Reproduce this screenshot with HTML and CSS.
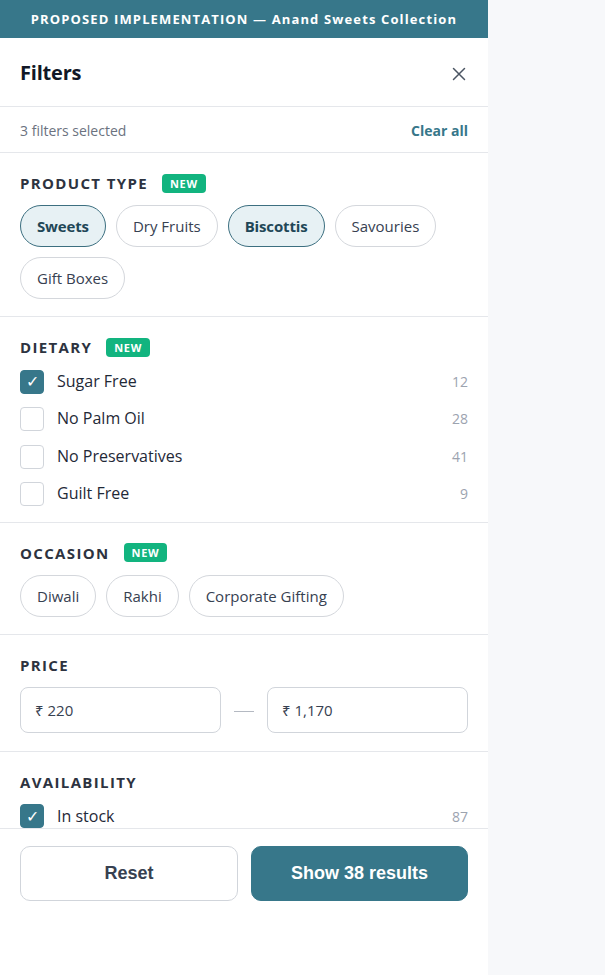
FILE: index.html
```html
<!DOCTYPE html>
<html lang="en">
<head>
<meta charset="utf-8">
<title>Filters</title>
<link rel="stylesheet" href="styles.css">
</head>
<body>
<div class="page">
  <aside class="panel">
    <div class="banner">PROPOSED IMPLEMENTATION — Anand Sweets Collection</div>
    <div class="scroll">
      <header class="head">
        <h1 class="title">Filters</h1>
        <button class="close" aria-label="Close">
          <svg width="14" height="14" viewBox="0 0 14 14"><path d="M1.5 1.5 L12.5 12.5 M12.5 1.5 L1.5 12.5" stroke="#4b5563" stroke-width="1.5" stroke-linecap="round"/></svg>
        </button>
      </header>
      <div class="summary">
        <span class="summary-text">3 filters selected</span>
        <a class="clear">Clear all</a>
      </div>

      <section class="section">
        <div class="sec-title">PRODUCT TYPE <span class="badge">NEW</span></div>
        <div class="chips">
          <span class="chip on">Sweets</span>
          <span class="chip">Dry Fruits</span>
          <span class="chip on">Biscottis</span>
          <span class="chip">Savouries</span>
          <span class="chip">Gift Boxes</span>
        </div>
      </section>

      <section class="section">
        <div class="sec-title">DIETARY <span class="badge">NEW</span></div>
        <ul class="list">
          <li class="row"><span class="box on">✓</span><span class="label">Sugar Free</span><span class="count">12</span></li>
          <li class="row"><span class="box"></span><span class="label">No Palm Oil</span><span class="count">28</span></li>
          <li class="row"><span class="box"></span><span class="label">No Preservatives</span><span class="count">41</span></li>
          <li class="row"><span class="box"></span><span class="label">Guilt Free</span><span class="count">9</span></li>
        </ul>
      </section>

      <section class="section">
        <div class="sec-title">OCCASION <span class="badge">NEW</span></div>
        <div class="chips">
          <span class="chip">Diwali</span>
          <span class="chip">Rakhi</span>
          <span class="chip">Corporate Gifting</span>
        </div>
      </section>

      <section class="section price-sec">
        <div class="sec-title">PRICE</div>
        <div class="price">
          <div class="input">₹ 220</div>
          <span class="dash"></span>
          <div class="input">₹ 1,170</div>
        </div>
      </section>

      <section class="section">
        <div class="sec-title">AVAILABILITY</div>
        <ul class="list">
          <li class="row"><span class="box on">✓</span><span class="label">In stock</span><span class="count">87</span></li>
        </ul>
      </section>
    </div>
    <footer class="foot">
      <button class="btn ghost">Reset</button>
      <button class="btn primary">Show 38 results</button>
    </footer>
  </aside>
  <div class="backdrop"></div>
</div>
</body>
</html>
```
FILE: styles.css
```css
* { box-sizing: border-box; }
html, body { margin: 0; padding: 0; height: 100%; }
body {
  font-family: "Open Sans", "Noto Sans", sans-serif;
  color: #1f2937;
  background: #f7f8fa;
  overflow: hidden;
}
.page { display: flex; height: 100vh; }
.panel {
  width: 488px;
  flex: none;
  background: #ffffff;
  display: flex;
  flex-direction: column;
  height: 100vh;
}
.backdrop { flex: 1; background: #f7f8fa; }

.banner {
  height: 38px;
  flex: none;
  background: #37778a;
  color: #ffffff;
  font-weight: 700;
  font-size: 13px;
  letter-spacing: 1.13px;
  display: flex;
  align-items: center;
  justify-content: center;
}

.scroll {
  height: 790px;
  flex: none;
  overflow: hidden;
}

.head {
  display: flex;
  align-items: center;
  justify-content: space-between;
  padding: 21px 20px 19px 20px;
  border-bottom: 1px solid #e5e7eb;
}
.title {
  margin: 0;
  font-size: 20px;
  line-height: 28px;
  font-weight: 700;
  color: #111827;
  letter-spacing: -0.2px;
}
.close {
  background: none;
  border: 0;
  padding: 0;
  margin-right: 2px;
  width: 14px;
  height: 14px;
  display: flex;
  margin-top: 2px;
}

.summary {
  display: flex;
  justify-content: space-between;
  align-items: center;
  padding: 13px 20px 11px;
  line-height: 21px;
  border-bottom: 1px solid #e5e7eb;
}
.summary-text { font-size: 14px; color: #6b7280; }
.clear { font-size: 14px; font-weight: 700; color: #37778a; }

.section {
  padding: 20px 20px 17px;
  border-bottom: 1px solid #e5e7eb;
}
.section:last-child { border-bottom: 0; }
.price-sec { padding-bottom: 18px; }
.sec-title {
  display: flex;
  align-items: center;
  height: 20px;
  font-size: 15px;
  font-weight: 700;
  letter-spacing: 1.35px;
  color: #2d3340;
  margin-bottom: 12px;
}
.badge {
  margin-left: 14px;
  background: #12b47f;
  color: #ffffff;
  font-size: 11px;
  line-height: 13px;
  letter-spacing: 0.7px;
  padding: 3px 8px 3px 8px;
  border-radius: 4px;
}

.chips {
  display: flex;
  flex-wrap: wrap;
  gap: 10px 10px;
}
.chip {
  border: 1px solid #d4d7dc;
  border-radius: 999px;
  padding: 8px 16px;
  font-size: 15px;
  line-height: 24px;
  color: #374151;
  background: #ffffff;
}
.chip.on {
  background: #e7f1f4;
  border-color: #3c6f80;
  color: #1f4757;
  font-weight: 700;
  letter-spacing: -0.15px;
}

.list {
  list-style: none;
  margin: -6px 0 -8px;
  padding: 0;
}
.row {
  display: flex;
  align-items: center;
  padding: 6px 0;
  line-height: 25.4px;
}
.box {
  width: 24px;
  height: 24px;
  flex: none;
  border: 1.5px solid #d1d5db;
  border-radius: 4px;
  margin-right: 13px;
  display: flex;
  align-items: center;
  justify-content: center;
  font-size: 16px;
  color: #ffffff;
  background: #ffffff;
}
.box.on {
  background: #37778a;
  border-color: #37778a;
}
.label { flex: 1; font-size: 16px; color: #1f2937; }
.count { font-size: 14px; color: #9ca3af; }

.price {
  display: grid;
  grid-template-columns: 1fr 22px 1fr;
  gap: 12px;
  align-items: center;
}
.input {
  height: 46px;
  border: 1px solid #d1d5db;
  border-radius: 8px;
  padding: 0 14px;
  display: flex;
  align-items: center;
  font-size: 15px;
  color: #374151;
}
.dash {
  height: 1px;
  background: #b4b9c2;
  margin: 3px 1px 0;
}

.foot {
  flex: 1;
  border-top: 1px solid #e5e7eb;
  padding: 17px 20px 20px;
  display: grid;
  grid-template-columns: 218px 1fr;
  gap: 13px;
  align-content: start;
  background: #ffffff;
}
.btn {
  height: 55px;
  border-radius: 10px;
  font-family: "Liberation Sans", Arial, sans-serif;
  font-size: 18px;
  font-weight: 700;
}
.btn.ghost {
  background: #ffffff;
  border: 1px solid #d1d5db;
  color: #374151;
}
.btn.primary {
  background: #37778a;
  border: 1px solid #37778a;
  color: #ffffff;
}
```
